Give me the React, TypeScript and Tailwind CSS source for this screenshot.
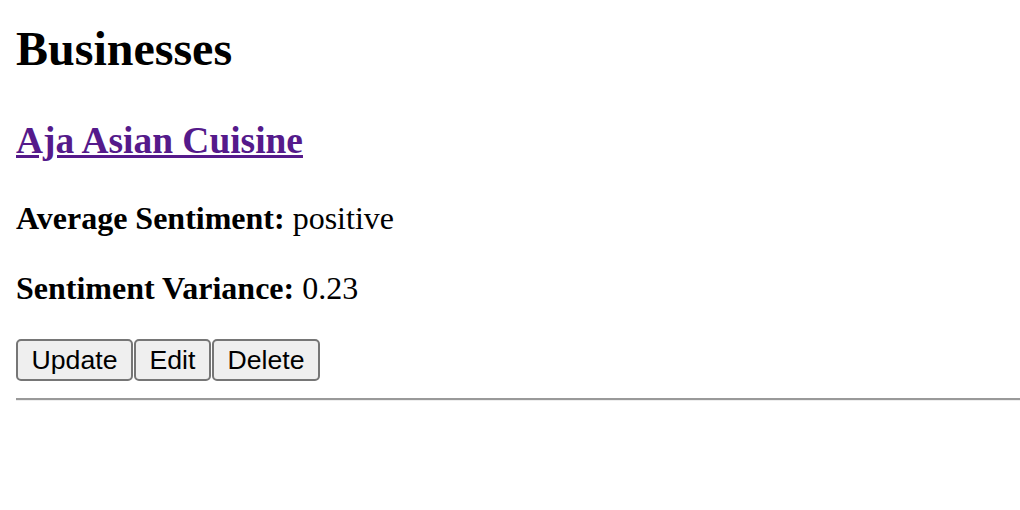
export default function App() {
  const serif = { fontFamily: '"Liberation Serif", "Times New Roman", serif' };
  const btn =
    "h-[42px] px-[13.5px] text-[26.67px] leading-[30px] text-black bg-[#efefef] border-2 border-[#767676] rounded-[5px]";
  return (
    <div className="bg-white w-[1020px] h-[510px] overflow-hidden text-black" style={serif}>
      <div className="pl-[16px]">
        <h1 className="text-[48px] font-bold leading-[53px] pt-[22px] m-0">Businesses</h1>
        <h3 className="text-[37.44px] font-bold leading-[41px] mt-[45px]">
          <a href="#" className="text-[#551a8b] underline">Aja Asian Cuisine</a>
        </h3>
        <p className="text-[32px] leading-[35px] mt-[40px]">
          <b>Average Sentiment:</b> positive
        </p>
        <p className="text-[32px] leading-[35px] mt-[35px]">
          <b>Sentiment Variance:</b> 0.23
        </p>
        <div className="flex gap-[1px] mt-[33px]" style={{ fontFamily: '"Liberation Sans", Arial, sans-serif' }}>
          <button className={btn}>Update</button>
          <button className={btn}>Edit</button>
          <button className={btn}>Delete</button>
        </div>
        <div className="mt-[17px] border-t-2 border-[#999999] border-b border-b-[#eeeeee] h-0" />
      </div>
    </div>
  );
}
